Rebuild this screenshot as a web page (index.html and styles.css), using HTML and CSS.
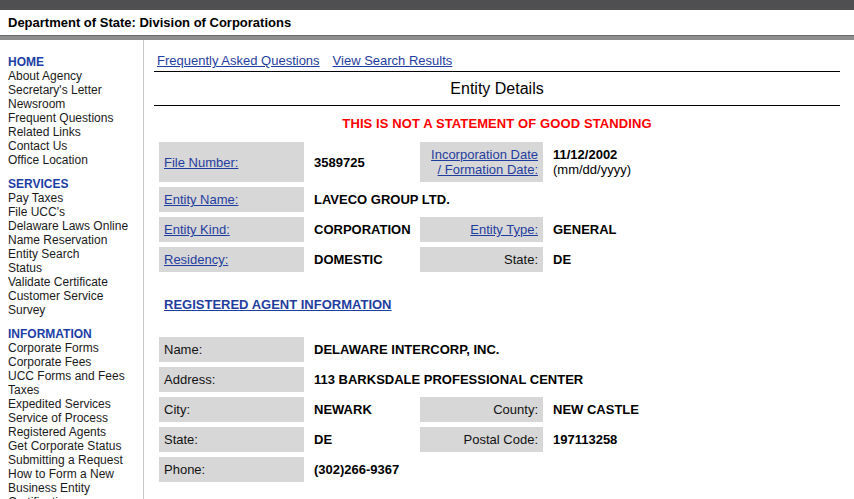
FILE: index.html
```html
<!DOCTYPE html>
<html>
<head>
<meta charset="utf-8">
<title>Entity Details</title>
<link rel="stylesheet" href="styles.css">
</head>
<body>
<div class="topbar"></div>
<div class="header">Department of State: Division of Corporations</div>
<div class="rule"></div>
<div class="layout">
  <nav class="sidebar">
    <div class="group">
      <div class="group-title">HOME</div>
      <div>About Agency</div>
      <div>Secretary's Letter</div>
      <div>Newsroom</div>
      <div>Frequent Questions</div>
      <div>Related Links</div>
      <div>Contact Us</div>
      <div>Office Location</div>
    </div>
    <div class="group">
      <div class="group-title">SERVICES</div>
      <div>Pay Taxes</div>
      <div>File UCC's</div>
      <div>Delaware Laws Online</div>
      <div>Name Reservation</div>
      <div>Entity Search</div>
      <div>Status</div>
      <div>Validate Certificate</div>
      <div>Customer Service</div>
      <div>Survey</div>
    </div>
    <div class="group">
      <div class="group-title">INFORMATION</div>
      <div>Corporate Forms</div>
      <div>Corporate Fees</div>
      <div>UCC Forms and Fees</div>
      <div>Taxes</div>
      <div>Expedited Services</div>
      <div>Service of Process</div>
      <div>Registered Agents</div>
      <div>Get Corporate Status</div>
      <div>Submitting a Request</div>
      <div>How to Form a New Business Entity</div>
      <div>Certifications, Apostilles &amp; Authentication of Documents</div>
    </div>
  </nav>
  <main class="main">
    <div class="toplinks"><a href="#">Frequently Asked Questions</a><a href="#">View Search Results</a></div>
    <h1 class="title">Entity Details</h1>
    <div class="warning">THIS IS NOT A STATEMENT OF GOOD STANDING</div>
    <table class="details">
      <colgroup><col class="c1"><col class="c2"><col class="c3"><col class="c4"></colgroup>
      <tr class="tall">
        <td class="lbl"><a href="#">File Number:</a></td>
        <td class="val">3589725</td>
        <td class="lbl right"><a href="#">Incorporation Date<br>/ Formation Date:</a></td>
        <td class="val">11/12/2002<br><span class="hint">(mm/dd/yyyy)</span></td>
      </tr>
      <tr>
        <td class="lbl"><a href="#">Entity Name:</a></td>
        <td class="val" colspan="3">LAVECO GROUP LTD.</td>
      </tr>
      <tr>
        <td class="lbl"><a href="#">Entity Kind:</a></td>
        <td class="val">CORPORATION</td>
        <td class="lbl right"><a href="#">Entity Type:</a></td>
        <td class="val">GENERAL</td>
      </tr>
      <tr>
        <td class="lbl"><a href="#">Residency:</a></td>
        <td class="val">DOMESTIC</td>
        <td class="lbl right">State:</td>
        <td class="val">DE</td>
      </tr>
    </table>
    <div class="section-head"><a href="#">REGISTERED AGENT INFORMATION</a></div>
    <table class="details">
      <colgroup><col class="c1"><col class="c2"><col class="c3"><col class="c4"></colgroup>
      <tr>
        <td class="lbl">Name:</td>
        <td class="val" colspan="3">DELAWARE INTERCORP, INC.</td>
      </tr>
      <tr>
        <td class="lbl">Address:</td>
        <td class="val" colspan="3">113 BARKSDALE PROFESSIONAL CENTER</td>
      </tr>
      <tr>
        <td class="lbl">City:</td>
        <td class="val">NEWARK</td>
        <td class="lbl right">County:</td>
        <td class="val">NEW CASTLE</td>
      </tr>
      <tr>
        <td class="lbl">State:</td>
        <td class="val">DE</td>
        <td class="lbl right">Postal Code:</td>
        <td class="val">197113258</td>
      </tr>
      <tr>
        <td class="lbl">Phone:</td>
        <td class="val" colspan="3">(302)266-9367</td>
      </tr>
    </table>
  </main>
</div>
</body>
</html>
```

FILE: styles.css
```css
html, body {
  margin: 0;
  padding: 0;
}
body {
  width: 854px;
  height: 499px;
  overflow: hidden;
  background: #fff;
  font-family: "Liberation Sans", Arial, sans-serif;
  color: #111;
}
.topbar {
  height: 10px;
  background: #4f4f51;
}
.header {
  height: 25px;
  line-height: 25px;
  padding-left: 8px;
  font-size: 13px;
  font-weight: bold;
  color: #000;
}
.rule {
  height: 4px;
  background: #8e8e8e;
  border-top: 1px solid #6a6a6a;
}
.layout {
  display: flex;
  align-items: stretch;
  height: 460px;
}
.sidebar {
  width: 135px;
  padding: 15px 0 0 8px;
  border-right: 1px solid #c8c8c8;
  font-size: 12px;
  line-height: 14px;
  color: #1a1a1a;
  flex-shrink: 0;
}
.group {
  margin-bottom: 10px;
  padding-right: 10px;
}
.group-title {
  font-weight: bold;
  color: #1b3ea6;
}
.main {
  width: 686px;
  padding-left: 10px;
}
.toplinks {
  margin-top: 13px;
  padding: 0 0 3px 3px;
  font-size: 13px;
  line-height: 15px;
  border-bottom: 1px solid #000;
  display: flex;
  gap: 13px;
}
a {
  color: #1f3d9e;
  text-decoration: underline;
}
.title {
  margin: 0;
  height: 33px;
  line-height: 33px;
  font-size: 16px;
  font-weight: normal;
  text-align: center;
  color: #000;
  border-bottom: 1px solid #000;
}
.warning {
  margin-top: 9px;
  font-size: 13px;
  line-height: 17px;
  font-weight: bold;
  color: #f00;
  text-align: center;
  letter-spacing: 0.1px;
}
.details {
  width: 686px;
  border-spacing: 5px;
  margin-top: 5px;
  font-size: 13px;
  table-layout: fixed;
}
.c1 { width: 145px; }
.c2 { width: 106px; }
.c3 { width: 123px; }
.details td {
  height: 25px;
  padding: 0 5px;
  vertical-align: middle;
  box-sizing: border-box;
  line-height: 15px;
}
.details tr.tall td {
  height: 40px;
}
.lbl {
  background: #d7d7d7;
  color: #111;
}
.lbl.right {
  text-align: right;
}
.val {
  font-weight: bold;
  color: #000;
}
.hint {
  font-weight: normal;
}
.section-head {
  padding: 20px 0 0 10px;
  font-size: 13px;
  font-weight: bold;
  line-height: 16px;
  height: 50px;
  box-sizing: border-box;
}
```
